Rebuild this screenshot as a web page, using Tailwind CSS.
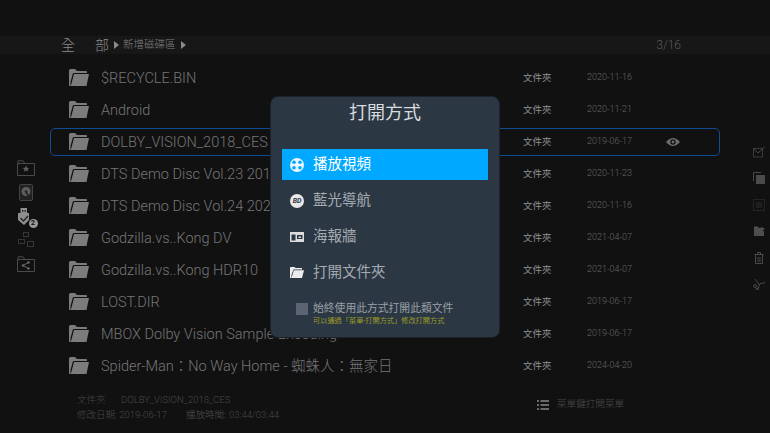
<!DOCTYPE html>
<html lang="zh-Hant">
<head>
<meta charset="UTF-8">
<title>打開方式</title>
<script src="https://cdn.jsdelivr.net/npm/@tailwindcss/browser@4"></script>
</head>
<body class="bg-[#111112] font-['Roboto','Noto_Sans_CJK_TC',sans-serif] font-light w-[770px] h-[433px] overflow-hidden relative">

<svg class="hidden">
  <symbol id="folder" viewBox="0 0 20 18"><path d="M0 17 V1.500 Q0 0 1.500 0 H6 L8 2 H17 Q18 2 18 3 V4 H5 Q4 4 3.700 5 L1.500 13 V17 Z" fill="#7c7c7c"/><path d="M5 5 H20 L17.500 17 H1.800 Z" fill="#7c7c7c"/></symbol>
</svg>

<!-- path bar -->
<div class="pt-[36px]">
  <div class="h-[18px] bg-[#171717] flex items-center pl-[61px] pr-[89px] text-[#8a8a8a]">
    <span class="text-[14px] w-[48px] flex justify-between"><span>全</span><span>部</span></span>
    <span class="w-0 h-0 border-y-[4px] border-y-transparent border-l-[5px] border-l-[#8a8a8a] ml-[5px]"></span>
    <span class="text-[10.500px] ml-[4px] text-[#808080]">新增磁碟區</span>
    <span class="w-0 h-0 border-y-[4px] border-y-transparent border-l-[5px] border-l-[#8a8a8a] ml-[5px]"></span>
    <span class="ml-auto text-[12px] text-[#5a5a5a]">3/16</span>
  </div>
</div>

<div class="flex">
  <!-- left side icons -->
  <div class="w-[50px] pt-[102px] flex flex-col items-center pl-[1px]">
    <div class="h-[24px] flex items-center"><svg class="w-[18px] h-[16px]" viewBox="0 0 18 16" fill="none"><path d="M.5 15.500 V3.500 H17.500 V15.500 Z M1 3 V.8 H6 L7.500 3" stroke="#4a4a4a"/><path d="M9 5.500 l1 2.200 2.300.2-1.800 1.500.6 2.300-2.100-1.300-2.100 1.300.6-2.300-1.800-1.500 2.300-.2z" fill="#5e5e5e"/></svg></div>
    <div class="h-[24px] flex items-center"><svg class="w-[14px] h-[17px]" viewBox="0 0 14 17" fill="none"><rect x=".5" y=".5" width="13" height="16" rx="1" stroke="#444" fill="#222"/><circle cx="7" cy="7.500" r="4.500" fill="#5d5d5d"/><circle cx="7" cy="7.500" r="1.300" fill="#222"/><path d="M7 8 l3 5" stroke="#222" stroke-width="1.500"/></svg></div>
    <div class="h-[24px] flex items-center pt-[2px]">
      <div class="relative w-[18px] h-[18px]">
        <svg class="w-[14px] h-[18px]" viewBox="0 0 14 18"><path d="M3.500 0 H10 V5 H12 V12 L7 17 L1 12 V5 H3.500 Z" fill="#8e8e8e"/><path d="M3.500 10 l3 3 4.500-5" stroke="#222" stroke-width="1.300" fill="none"/><rect x="5" y="2" width="1.300" height="1.800" fill="#222"/><rect x="7.500" y="2" width="1.300" height="1.800" fill="#222"/></svg>
        <span class="absolute right-[-3px] bottom-[-2px] w-[9px] h-[9px] rounded-full bg-[#999] text-[#111] text-[7px] leading-[9px] text-center font-bold">2</span>
      </div>
    </div>
    <div class="h-[24px] flex items-center"><svg class="w-[16px] h-[16px]" viewBox="0 0 16 16" fill="none" stroke="#363636"><rect x="5.500" y=".5" width="5" height="4"/><rect x=".5" y="7.500" width="6" height="4"/><rect x="9.500" y="9.500" width="6" height="5"/></svg></div>
    <div class="h-[24px] flex items-center"><svg class="w-[18px] h-[16px]" viewBox="0 0 18 16" fill="none"><path d="M.5 15.500 V3.500 H17.500 V15.500 Z M1 3 V.8 H6 L7.500 3" stroke="#4a4a4a"/><circle cx="6" cy="9.500" r="1.300" fill="#666"/><circle cx="11.500" cy="6.500" r="1.300" fill="#666"/><circle cx="11.500" cy="12.500" r="1.300" fill="#666"/><path d="M6 9.500 L11.500 6.500 M6 9.500 L11.500 12.500" stroke="#666"/></svg></div>
  </div>

  <!-- file list -->
  <div class="w-[670px] pt-[8px] text-[#767676]">
    <div class="h-[32px] flex items-center pl-[19px]">
      <svg class="w-[20px] h-[18px] shrink-0"><use href="#folder"/></svg>
      <span class="ml-[12px] pt-[1px] w-[422px] text-[14.500px] whitespace-nowrap overflow-hidden">$RECYCLE.BIN</span>
      <span class="text-[9.500px] text-[#909090] w-[64px] font-normal">文件夾</span><span class="text-[9px] text-[#666]">2020-11-16</span>
    </div>
    <div class="h-[32px] flex items-center pl-[19px]">
      <svg class="w-[20px] h-[18px] shrink-0"><use href="#folder"/></svg>
      <span class="ml-[12px] pt-[1px] w-[422px] text-[14.500px] whitespace-nowrap overflow-hidden">Android</span>
      <span class="text-[9.500px] text-[#909090] w-[64px] font-normal">文件夾</span><span class="text-[9px] text-[#666]">2020-11-21</span>
    </div>
    <div class="h-[32px] flex items-center pl-[19px] relative">
      <div class="absolute left-0 right-0 top-[2px] bottom-[2px] border-[1.500px] border-[#0f4c92] rounded-[5px]"></div>
      <svg class="w-[20px] h-[18px] shrink-0"><use href="#folder"/></svg>
      <span class="ml-[12px] pt-[1px] w-[422px] text-[14.500px] whitespace-nowrap overflow-hidden">DOLBY_VISION_2018_CES</span>
      <span class="text-[9.500px] text-[#909090] w-[64px] font-normal">文件夾</span><span class="text-[9px] text-[#666]">2019-06-17</span>
      <svg class="w-[14px] h-[10px] ml-[34px]" viewBox="0 0 14 10"><path d="M0 5 Q7 -3 14 5 Q7 13 0 5Z" fill="#6c6c6c"/><circle cx="7" cy="5" r="2.700" fill="#111"/><circle cx="7" cy="5" r="1.400" fill="#6c6c6c"/></svg>
    </div>
    <div class="h-[32px] flex items-center pl-[19px]">
      <svg class="w-[20px] h-[18px] shrink-0"><use href="#folder"/></svg>
      <span class="ml-[12px] pt-[1px] w-[422px] text-[14.500px] whitespace-nowrap overflow-hidden">DTS Demo Disc Vol.23 2019</span>
      <span class="text-[9.500px] text-[#909090] w-[64px] font-normal">文件夾</span><span class="text-[9px] text-[#666]">2020-11-23</span>
    </div>
    <div class="h-[32px] flex items-center pl-[19px]">
      <svg class="w-[20px] h-[18px] shrink-0"><use href="#folder"/></svg>
      <span class="ml-[12px] pt-[1px] w-[422px] text-[14.500px] whitespace-nowrap overflow-hidden">DTS Demo Disc Vol.24 2020</span>
      <span class="text-[9.500px] text-[#909090] w-[64px] font-normal">文件夾</span><span class="text-[9px] text-[#666]">2020-11-16</span>
    </div>
    <div class="h-[32px] flex items-center pl-[19px]">
      <svg class="w-[20px] h-[18px] shrink-0"><use href="#folder"/></svg>
      <span class="ml-[12px] pt-[1px] w-[422px] text-[14.500px] whitespace-nowrap overflow-hidden">Godzilla.vs..Kong DV</span>
      <span class="text-[9.500px] text-[#909090] w-[64px] font-normal">文件夾</span><span class="text-[9px] text-[#666]">2021-04-07</span>
    </div>
    <div class="h-[32px] flex items-center pl-[19px]">
      <svg class="w-[20px] h-[18px] shrink-0"><use href="#folder"/></svg>
      <span class="ml-[12px] pt-[1px] w-[422px] text-[14.500px] whitespace-nowrap overflow-hidden">Godzilla.vs..Kong HDR10</span>
      <span class="text-[9.500px] text-[#909090] w-[64px] font-normal">文件夾</span><span class="text-[9px] text-[#666]">2021-04-07</span>
    </div>
    <div class="h-[32px] flex items-center pl-[19px]">
      <svg class="w-[20px] h-[18px] shrink-0"><use href="#folder"/></svg>
      <span class="ml-[12px] pt-[1px] w-[422px] text-[14.500px] whitespace-nowrap overflow-hidden">LOST.DIR</span>
      <span class="text-[9.500px] text-[#909090] w-[64px] font-normal">文件夾</span><span class="text-[9px] text-[#666]">2019-06-17</span>
    </div>
    <div class="h-[32px] flex items-center pl-[19px]">
      <svg class="w-[20px] h-[18px] shrink-0"><use href="#folder"/></svg>
      <span class="ml-[12px] pt-[1px] w-[422px] text-[14.500px] whitespace-nowrap overflow-hidden">MBOX Dolby Vision Sample Encoding</span>
      <span class="text-[9.500px] text-[#909090] w-[64px] font-normal">文件夾</span><span class="text-[9px] text-[#666]">2019-06-17</span>
    </div>
    <div class="h-[32px] flex items-center pl-[19px]">
      <svg class="w-[20px] h-[18px] shrink-0"><use href="#folder"/></svg>
      <span class="ml-[12px] pt-[1px] w-[422px] text-[14.500px] whitespace-nowrap overflow-hidden">Spider-Man：No Way Home - 蜘蛛人：無家日</span>
      <span class="text-[9.500px] text-[#909090] w-[64px] font-normal">文件夾</span><span class="text-[9px] text-[#666]">2024-04-20</span>
    </div>

    <!-- footer info -->
    <div class="flex pt-[11px]">
      <div class="pl-[27px] w-[487px] text-[9.500px] leading-[14.500px] text-[#484848]">
        <div class="flex"><span class="w-[44px]">文件夾</span><span>DOLBY_VISION_2018_CES</span></div>
        <div class="flex"><span class="w-[38px]">修改日期</span><span class="w-[71px]"> : 2019-06-17</span><span class="text-[#505050]">播放時間:</span><span class="ml-[3px]">03:44/03:44</span></div>
      </div>
      <div class="flex items-center h-[23px] text-[9.600px] text-[#4a4a4a]">
        <svg class="w-[12px] h-[10px] mr-[8px]" viewBox="0 0 12 10" fill="#6a6a6a"><rect y="0" width="2" height="2"/><rect y="4" width="2" height="2"/><rect y="8" width="2" height="2"/><rect x="3.500" y="0" width="8.500" height="2"/><rect x="3.500" y="4" width="8.500" height="2"/><rect x="3.500" y="8" width="8.500" height="2"/></svg>
        菜單鍵打開菜單
      </div>
    </div>
  </div>

  <!-- right side icons -->
  <div class="w-[50px] pt-[92px] pl-[33px] flex flex-col gap-[14.400px]">
    <svg class="w-[12px] h-[12px]" viewBox="0 0 12 12" fill="none" stroke="#3a3a3a"><rect x=".5" y="2.500" width="9" height="8.500"/><path d="M1 3 L5 7 L11.500 1" stroke="#484848"/></svg>
    <svg class="w-[12px] h-[12px]" viewBox="0 0 12 12"><path d="M.5 9 V.5 H8" fill="none" stroke="#4a4a4a"/><rect x="3" y="3" width="9" height="9" fill="#4a4a4a"/></svg>
    <svg class="w-[12px] h-[12px]" viewBox="0 0 12 12" fill="none"><rect x=".5" y=".5" width="11" height="11" stroke="#242424"/><rect x="3" y="3" width="6" height="6" fill="#1f1f1f"/></svg>
    <svg class="w-[12px] h-[12px]" viewBox="0 0 12 12"><path d="M1 11 V1.500 H5 L6 3 H8 V1.500 L12 4 L9 6 H11 V11 Z" fill="#4e4e4e"/></svg>
    <svg class="w-[12px] h-[12px]" viewBox="0 0 12 12" fill="none" stroke="#4a4a4a"><path d="M1.500 2.500 H10.500 M4.500 2 V.5 H7.500 V2"/><path d="M2.500 3 V11.500 H9.500 V3 M5 5 V10 M7 5 V10"/></svg>
    <svg class="w-[12px] h-[12px]" viewBox="0 0 12 12" fill="none" stroke="#4a4a4a"><path d="M2 1 L6.500 7 M5 11.500 L6.500 6 L12 4.500"/><circle cx="2" cy="8" r="1.500"/><circle cx="4" cy="11" r="1"/></svg>
  </div>
</div>

<!-- open-with dialog -->
<div class="absolute left-[270px] top-[96px] w-[230px] h-[242px] rounded-[8px] bg-[#2b3743] border border-[#1b222a] pt-[4px] pl-[11px] pr-[11px] font-normal">
  <div class="text-[18px] leading-[24px] text-center text-[#d8dcdf]">打開方式</div>
  <div class="mt-[24px] h-[31px] bg-[#00a8ff] flex items-center pl-[8px] text-white text-[14.500px]">
    <svg class="w-[14px] h-[14px] mr-[9px] shrink-0" viewBox="0 0 14 14"><circle cx="7" cy="7" r="7" fill="#eaf6ff"/><circle cx="4" cy="4.200" r="1.800" fill="#00a8ff"/><circle cx="10" cy="4.200" r="1.800" fill="#00a8ff"/><circle cx="4" cy="9.800" r="1.800" fill="#00a8ff"/><circle cx="10" cy="9.800" r="1.800" fill="#00a8ff"/></svg>
    播放視頻
  </div>
  <div class="mt-[5px] h-[31px] flex items-center pl-[8px] text-[#a5abb1] text-[14.500px]">
    <span class="w-[14px] h-[14px] mr-[9px] shrink-0 rounded-full bg-[#e8e8e8] text-[#2b3743] text-[7px] leading-[14px] text-center font-bold italic">BD</span>
    藍光導航
  </div>
  <div class="mt-[5px] h-[31px] flex items-center pl-[8px] text-[#a5abb1] text-[14.500px]">
    <svg class="w-[14px] h-[10px] mr-[9px] shrink-0" viewBox="0 0 14 10"><rect width="14" height="10" fill="#dcdcdc"/><rect x="1.500" y="2.500" width="4" height="6" fill="#2b3743"/><rect x="7" y="3" width="5.500" height="4" fill="#2b3743"/><rect x="8.500" y="4.500" width="2.500" height="1.500" fill="#dcdcdc"/></svg>
    海報牆
  </div>
  <div class="mt-[5px] h-[31px] flex items-center pl-[8px] text-[#a5abb1] text-[14.500px]">
    <svg class="w-[14px] h-[11px] mr-[9px] shrink-0" viewBox="0 0 14 11"><path d="M0 11 V.8 Q0 0 1 0 H4.500 L5.500 1 H12 V2.500 H3.500 L1.500 8 V11 Z" fill="#ececec"/><path d="M3.800 3.300 H14 L12 11 H1.500 Z" fill="#ececec"/></svg>
    打開文件夾
  </div>
  <div class="mt-[14px] flex items-center pl-[14px]">
    <span class="w-[12px] h-[12px] bg-[#5a6472] mr-[5px] shrink-0"></span>
    <span class="text-[10.800px] leading-[14px] text-[#9aa0a6]">始終使用此方式打開此類文件</span>
  </div>
  <div class="pl-[31px] text-[7.200px] leading-[10px] text-[#9c9a2a]">可以通過「菜單-打開方式」修改打開方式</div>
</div>

</body>
</html>
